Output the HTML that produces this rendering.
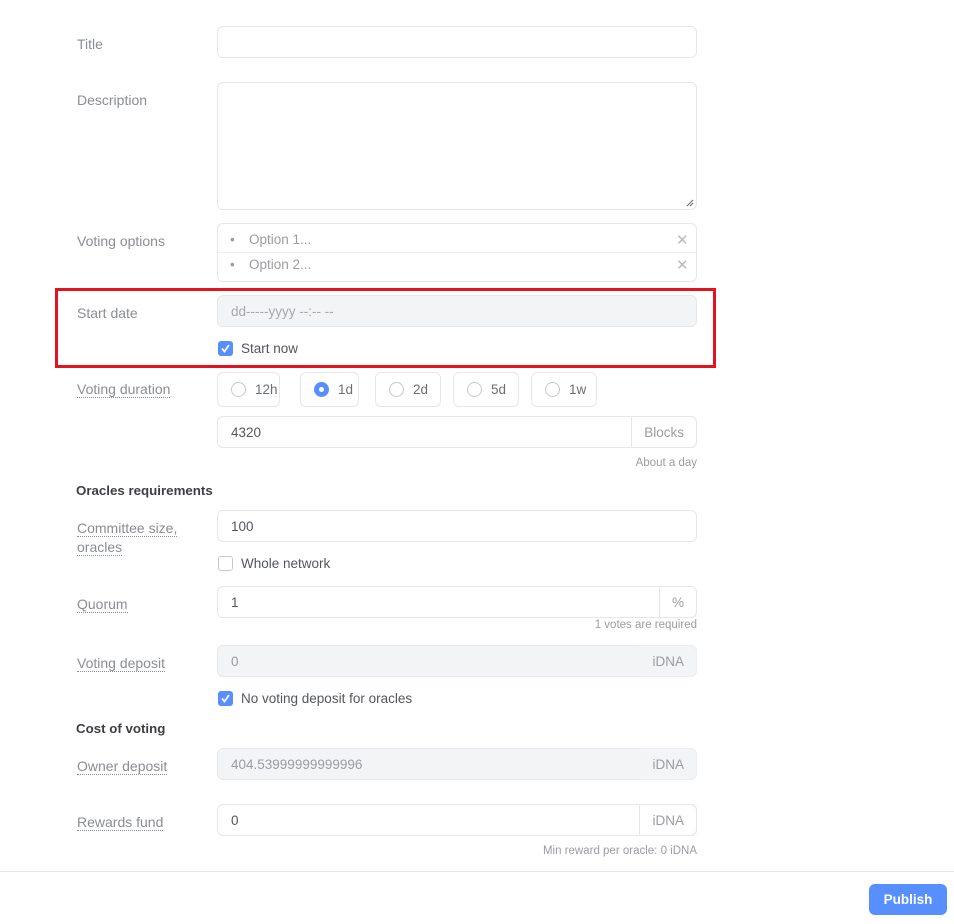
<!DOCTYPE html>
<html><head><meta charset="utf-8"><style>
*{box-sizing:border-box;margin:0;padding:0}
body{width:954px;height:924px;background:#fff;font-family:"Liberation Sans",sans-serif;font-size:13.5px;color:#53565c;position:relative;overflow:hidden}
.a{position:absolute}
.lbl{position:absolute;left:77px;color:#8a8d92;font-size:14px;line-height:18px}
.u{border-bottom:1px dotted #8a8d92}
.in{position:absolute;left:217px;width:480px;height:32px;border:1px solid #e5e7eb;border-radius:6px;background:#fff;padding-left:13px;line-height:31px;color:#53565c}
.dis{background:#f3f4f6;color:#9a9ca1}
.addon{position:absolute;top:-1px;right:-1px;height:32px;border:1px solid #e5e7eb;border-radius:0 6px 6px 0;padding:0 12px;line-height:31px;color:#9a9ca1}
.cb{position:absolute;left:218px;width:15px;height:15px;border-radius:3px;background:#578fff}
.cb.off{background:#fff;border:1.5px solid #c6c8cc}
.cbt{position:absolute;left:241px;color:#53565c;line-height:16px}
.rb{position:absolute;top:372px;height:35px;border:1px solid #e5e7eb;border-radius:6px;line-height:34px;padding-left:37px;color:#6b6e73}
.rb i{position:absolute;left:13px;top:9px;width:15px;height:15px;border-radius:50%;border:1.5px solid #c6c8cc}
.rb i.on{border:none;background:#578fff}
.rb i.on:after{content:"";position:absolute;left:5px;top:5px;width:5px;height:5px;border-radius:50%;background:#fff}
.h{position:absolute;left:76px;font-weight:bold;color:#3d3f44;font-size:13.3px}
.small{position:absolute;right:257px;font-size:11.5px;color:#9a9ca1}
</style></head><body>
<div class="lbl" style="top:35px">Title</div>
<div class="in" style="top:26px"></div>
<div class="lbl" style="top:91px">Description</div>
<div class="in" style="top:82px;height:128px"><svg class="a" style="right:2px;bottom:2px" width="8" height="8"><path d="M1 7L7 1M4 7L7 4" stroke="#666" stroke-width="1"/></svg></div>
<div class="lbl" style="top:232px">Voting options</div>
<div class="in" style="top:223px;height:59px;padding:0"></div>
<div class="a" style="left:218px;top:252px;width:478px;border-top:1px solid #eceef1"></div>
<div class="a" style="left:230px;top:232px;color:#9a9ca1">•</div>
<div class="a" style="left:249px;top:232px;color:#9a9ca1">Option 1...</div>
<div class="a" style="left:230px;top:257px;color:#9a9ca1">•</div>
<div class="a" style="left:249px;top:257px;color:#9a9ca1">Option 2...</div>
<div class="a" style="left:676px;top:231px;color:#b8babe;font-size:15px">✕</div>
<div class="a" style="left:676px;top:256px;color:#b8babe;font-size:15px">✕</div>

<div class="a" style="left:55px;top:288px;width:661px;height:80px;border:3px solid #e3141e"></div>
<div class="lbl" style="top:304px">Start date</div>
<div class="in dis" style="top:295px;color:#a6a8ad">dd-----yyyy --:-- --</div>
<div class="cb" style="top:341px"><svg width="15" height="15"><path d="M4 7.5l2.5 3L11 4" stroke="#fff" stroke-width="1.8" fill="none"/></svg></div>
<div class="cbt" style="top:341px">Start now</div>

<div class="lbl" style="top:380px"><span class="u">Voting duration</span></div>
<div class="rb" style="left:217px;width:63px"><i></i>12h</div>
<div class="rb" style="left:300px;width:59px"><i class="on"></i>1d</div>
<div class="rb" style="left:375px;width:66px"><i></i>2d</div>
<div class="rb" style="left:453px;width:66px"><i></i>5d</div>
<div class="rb" style="left:531px;width:66px"><i></i>1w</div>
<div class="in" style="top:416px">4320<div class="addon">Blocks</div></div>
<div class="small" style="top:457px">About a day</div>

<div class="h" style="top:483px">Oracles requirements</div>
<div class="lbl" style="top:519px;line-height:19px"><span class="u">Committee size,</span><br><span class="u">oracles</span></div>
<div class="in" style="top:510px">100</div>
<div class="cb off" style="top:556px"></div>
<div class="cbt" style="top:556px">Whole network</div>
<div class="lbl" style="top:595px"><span class="u">Quorum</span></div>
<div class="in" style="top:586px">1<div class="addon">%</div></div>
<div class="small" style="top:619px">1 votes are required</div>
<div class="lbl" style="top:654px"><span class="u">Voting deposit</span></div>
<div class="in dis" style="top:645px">0<div class="addon" style="border-color:#eceef1;border-left-color:#f3f4f6">iDNA</div></div>
<div class="cb" style="top:691px"><svg width="15" height="15"><path d="M4 7.5l2.5 3L11 4" stroke="#fff" stroke-width="1.8" fill="none"/></svg></div>
<div class="cbt" style="top:691px">No voting deposit for oracles</div>

<div class="h" style="top:721px">Cost of voting</div>
<div class="lbl" style="top:757px"><span class="u">Owner deposit</span></div>
<div class="in dis" style="top:748px">404.53999999999996<div class="addon" style="border-color:#eceef1;border-left-color:#f3f4f6">iDNA</div></div>
<div class="lbl" style="top:813px"><span class="u">Rewards fund</span></div>
<div class="in" style="top:804px">0<div class="addon">iDNA</div></div>
<div class="small" style="top:845px">Min reward per oracle: 0 iDNA</div>

<div class="a" style="left:0;top:871px;width:954px;border-top:1px solid #e5e7eb"></div>
<div class="a" style="left:869px;top:884px;width:78px;height:31px;background:#578fff;border-radius:6px;color:#fff;font-weight:bold;text-align:center;line-height:31px">Publish</div>
</body></html>
